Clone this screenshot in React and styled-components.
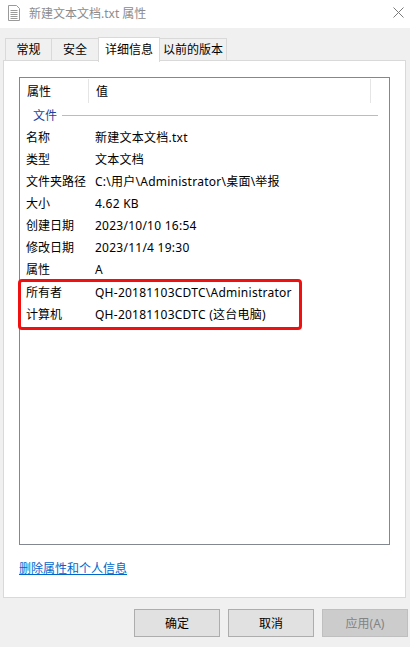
import styled, { createGlobalStyle } from "styled-components";

const GlobalStyle = createGlobalStyle`
  html, body {
    margin: 0;
    padding: 0;
    background: #f0f0f0;
  }
  body {
    font-family: "Noto Sans", "Noto Sans CJK SC", sans-serif;
    font-size: 12px;
    color: #000;
  }
`;

const rows = [
  ["名称", "新建文本文档.txt"],
  ["类型", "文本文档"],
  ["文件夹路径", "C:\\用户\\Administrator\\桌面\\举报"],
  ["大小", "4.62 KB"],
  ["创建日期", "2023/10/10 16:54"],
  ["修改日期", "2023/11/4 19:30"],
  ["属性", "A"],
];

const marked = [
  ["所有者", "QH-20181103CDTC\\Administrator"],
  ["计算机", "QH-20181103CDTC (这台电脑)"],
];

const tabs = ["常规", "安全", "详细信息", "以前的版本"];
const tabWidths = [47, 48, 62, 68];

export default function App() {
  return (
    <>
      <GlobalStyle />
      <Window>
        <TitleBar>
          <FileIcon width="14" height="16" viewBox="0 0 14 16">
            <path d="M1.5 0.5h8l3 3v12h-11z" fill="#fff" stroke="#9a9a9a" />
            <path d="M3.5 5.5h7M3.5 7.5h7M3.5 9.5h7M3.5 11.5h7M3.5 13.5h7" stroke="#9a9a9a" />
          </FileIcon>
          <TitleText>新建文本文档.txt 属性</TitleText>
          <CloseIcon width="11" height="11" viewBox="0 0 11 11">
            <path d="M0.5 0.5l10 10M10.5 0.5l-10 10" stroke="#7a7a7a" strokeWidth="1" />
          </CloseIcon>
        </TitleBar>

        <Body>
          <TabRow>
            {tabs.map((t, i) => (
              <Tab key={t} $active={i === 2} style={{ width: tabWidths[i] }}>
                {t}
              </Tab>
            ))}
          </TabRow>

          <Panel>
            <ListBox>
              <Header>
                <HeaderCell $w={69}>属性</HeaderCell>
                <HeaderCell $w={282}>值</HeaderCell>
              </Header>
              <GroupRow>
                <GroupLabel>文件</GroupLabel>
                <GroupLine />
              </GroupRow>
              {rows.map(([k, v]) => (
                <Row key={k}>
                  <Key>{k}</Key>
                  <Value>{v}</Value>
                </Row>
              ))}
              <Highlight>
                {marked.map(([k, v]) => (
                  <Row key={k}>
                    <Key>{k}</Key>
                    <Value>{v}</Value>
                  </Row>
                ))}
              </Highlight>
            </ListBox>
            <RemoveLink href="#">删除属性和个人信息</RemoveLink>
          </Panel>

          <ButtonRow>
            <Button>确定</Button>
            <Button>取消</Button>
            <Button disabled>应用(A)</Button>
          </ButtonRow>
        </Body>
      </Window>
    </>
  );
}

const Window = styled.div`
  width: 410px;
  height: 647px;
  display: flex;
  flex-direction: column;
  overflow: hidden;
`;

const TitleBar = styled.div`
  height: 28px;
  background: #fff;
  display: flex;
  align-items: center;
  padding: 0 5px 0 5px;
  box-sizing: border-box;
`;

const FileIcon = styled.svg`
  margin-left: 2px;
  margin-right: 8px;
  margin-top: -2px;
`;

const TitleText = styled.span`
  color: #8c8c8c;
  font-size: 12px;
  flex: 1;
  margin-top: -2px;
`;

const CloseIcon = styled.svg`
  margin-right: 1px;
  margin-top: -3px;
`;

const Body = styled.div`
  flex: 1;
  display: flex;
  flex-direction: column;
  padding: 9px 4px 10px 3px;
  box-sizing: border-box;
`;

const TabRow = styled.div`
  display: flex;
  align-items: flex-end;
  height: 24px;
  padding-left: 2px;
  position: relative;
  z-index: 1;
`;

const Tab = styled.div`
  box-sizing: border-box;
  height: ${(p) => (p.$active ? "25px" : "23px")};
  margin-bottom: ${(p) => (p.$active ? "-1px" : "0")};
  background: ${(p) => (p.$active ? "#fff" : "#f0f0f0")};
  border: 1px solid #d9d9d9;
  border-bottom: ${(p) => (p.$active ? "none" : "1px solid #d9d9d9")};
  margin-right: -1px;
  display: flex;
  align-items: center;
  justify-content: center;
  font-size: 12px;
  line-height: 14px;
  padding-top: ${(p) => (p.$active ? "0" : "1px")};
`;

const Panel = styled.div`
  flex: 1;
  background: #fff;
  border: 1px solid #d9d9d9;
  margin-top: -1px;
  padding: 16px 15px 0 15px;
  display: flex;
  flex-direction: column;
  box-sizing: border-box;
`;

const ListBox = styled.div`
  height: 468px;
  border: 1px solid #828790;
  box-sizing: border-box;
  display: flex;
  flex-direction: column;
`;

const Header = styled.div`
  display: flex;
  height: 25px;
`;

const HeaderCell = styled.div`
  width: ${(p) => p.$w}px;
  box-sizing: border-box;
  padding-left: 7px;
  border-right: 1px solid #e5e5e5;
  margin: 1px 0 0 0;
  display: flex;
  align-items: center;
  line-height: 14px;
  padding-top: 1px;
`;

const GroupRow = styled.div`
  display: flex;
  align-items: center;
  height: 23px;
  padding-left: 13px;
  margin-top: 1px;
`;

const GroupLabel = styled.span`
  color: #1f3f9c;
  line-height: 14px;
`;

const GroupLine = styled.div`
  height: 1px;
  width: 316px;
  margin-left: 5px;
  background: #a9bde6;
`;

const Row = styled.div`
  display: flex;
  align-items: center;
  height: 22px;
  line-height: 14px;
  white-space: nowrap;
`;

const Key = styled.span`
  width: 75px;
  padding-left: 6px;
  box-sizing: border-box;
`;

const Value = styled.span`
  letter-spacing: 0.25px;
`;

const Highlight = styled.div`
  position: relative;
  margin-top: 1px;

  &::after {
    content: "";
    position: absolute;
    left: -2px;
    top: -3px;
    width: 284px;
    height: 51px;
    border: 3px solid #f01010;
    border-radius: 4px;
    box-sizing: border-box;
    pointer-events: none;
  }
`;

const RemoveLink = styled.a`
  margin-top: 17px;
  color: #0066cc;
  font-size: 12px;
  line-height: 14px;
  text-decoration: underline;
  align-self: flex-start;
`;

const ButtonRow = styled.div`
  display: flex;
  justify-content: flex-end;
  gap: 8px;
  margin-top: 11px;
  margin-right: -2px;
`;

const Button = styled.button`
  width: 86px;
  height: 28px;
  font-family: inherit;
  font-size: 12px;
  background: ${(p) => (p.disabled ? "#cccccc" : "#e1e1e1")};
  border: 1px solid ${(p) => (p.disabled ? "#bfbfbf" : "#adadad")};
  color: ${(p) => (p.disabled ? "#838383" : "#000")};
  padding: 0;
  border-radius: 0;
`;
